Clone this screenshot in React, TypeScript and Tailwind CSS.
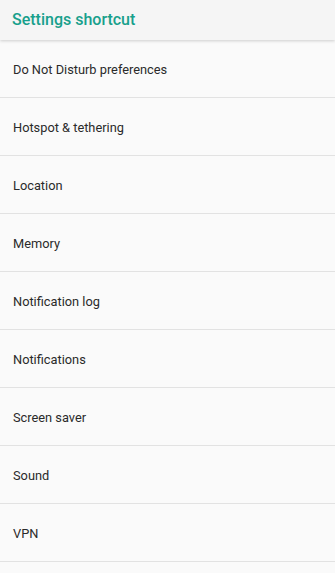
const items = [
  'Do Not Disturb preferences',
  'Hotspot & tethering',
  'Location',
  'Memory',
  'Notification log',
  'Notifications',
  'Screen saver',
  'Sound',
  'VPN',
];

export default function App() {
  return (
    <div className="h-[573px] w-[335px] overflow-hidden bg-[#fafafa] font-['Roboto',sans-serif]">
      <header className="relative z-10 flex h-10 items-center bg-[#f5f5f5] px-3 shadow-[0_1px_3px_rgba(0,0,0,0.18)]">
        <h1 className="text-[16px] font-medium text-[#18a08c]">Settings shortcut</h1>
      </header>
      <ul>
        {items.map((item) => (
          <li
            key={item}
            className="flex h-[58px] items-center border-b border-[#e2e2e2] px-[13px] pt-[2px] text-[12.8px] text-[#2a2a2a]"
          >
            {item}
          </li>
        ))}
      </ul>
    </div>
  );
}
